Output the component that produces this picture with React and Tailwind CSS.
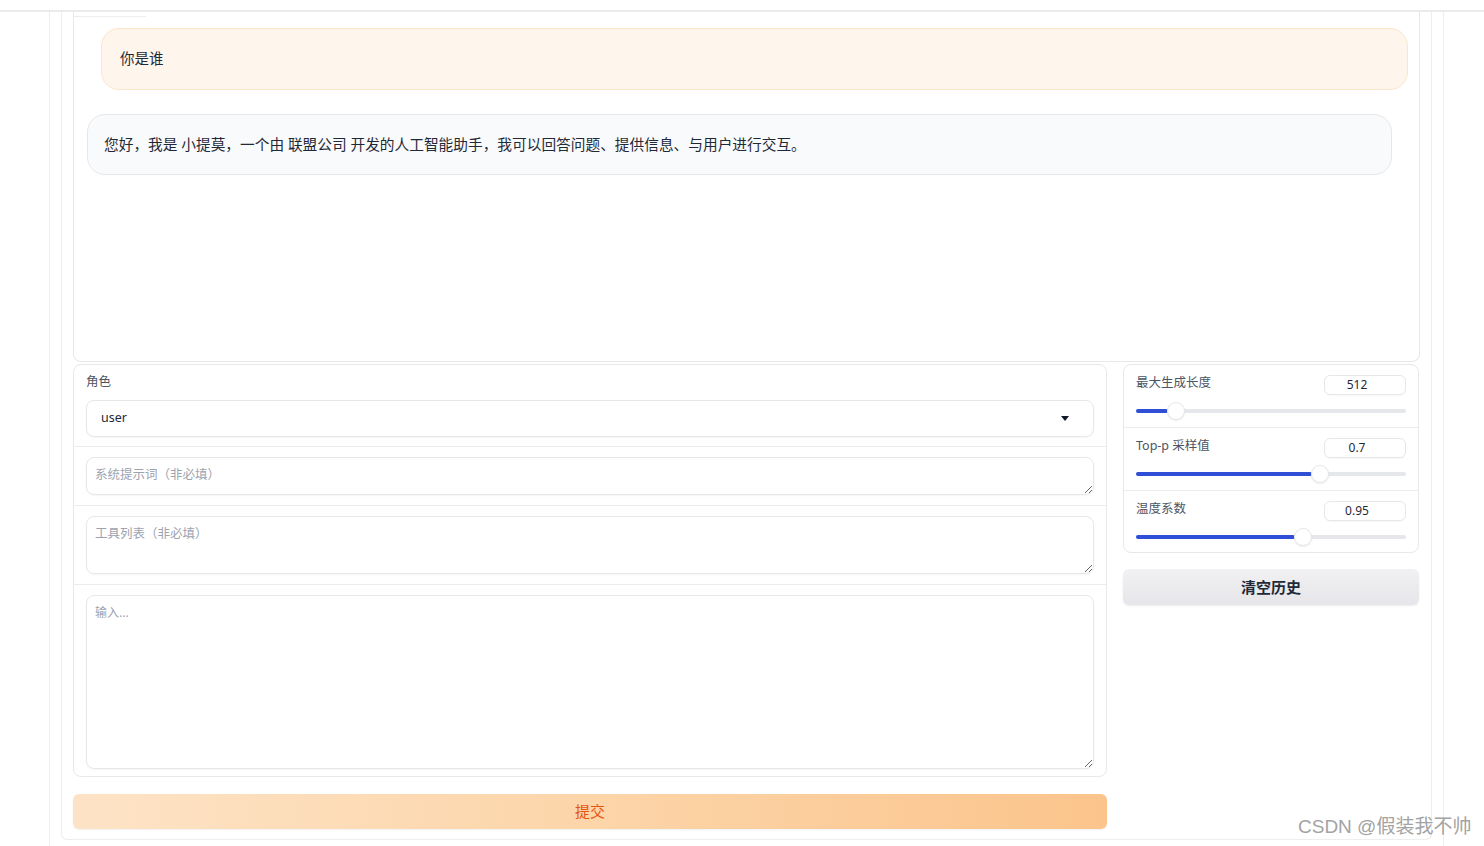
import React from "react";

const cjk = "font-['Noto_Sans','Noto_Sans_CJK_SC',sans-serif]";

function SliderBlock({ label, value, frac, last }) {
  return (
    <div className={`h-[63px] px-3 pt-[9px] ${last ? "" : "border-b border-[#ececec]"}`}>
      <div className="flex items-start justify-between">
        <span className="text-[12.5px] leading-[18px] text-[#4b5563]">{label}</span>
        <div className="mt-[1px] w-[82px] h-[20px] border border-[#e5e7eb] rounded-md flex items-center justify-center pr-[16px] text-[12px] text-[#1f2937] shadow-[0_1px_1px_rgba(0,0,0,0.03)]">
          {value}
        </div>
      </div>
      <div className="relative mt-[14px] h-[4px] rounded-full bg-[#e5e7eb]">
        <div className="absolute left-0 top-0 h-[4px] rounded-full bg-[#2f4fd6]" style={{ width: `${frac * 100 - 3}%` }} />
        <div
          className="absolute top-1/2 w-[18px] h-[18px] -translate-x-1/2 -translate-y-1/2 rounded-full bg-white border border-[#e5e7eb] shadow-[0_1px_2px_rgba(0,0,0,0.08)]"
          style={{ left: `${frac * 100}%` }}
        />
      </div>
    </div>
  );
}

export default function App() {
  return (
    <div className={`relative w-[1484px] h-[846px] overflow-hidden bg-white ${cjk}`}>
      {/* browser top strip */}
      <div className="h-[12px] border-b-2 border-[#ebebeb] bg-white" />

      <div className="flex h-[834px]">
        <div className="w-[49px] shrink-0" />
        {/* outer container */}
        <div className="w-[1395px] shrink-0 border-l border-r border-[#eeeeee] pl-[11px] pr-[11px]">
          {/* inner container */}
          <div className="h-[828px] border-l border-r border-b border-[#eeeeee] rounded-b-md px-[11px]">
            {/* chat box */}
            <div className="h-[350px] border-l border-r border-b border-[#e8e8e8] rounded-b-lg relative">
              <div className="absolute left-0 top-[4px] w-[72px] border-t border-[#eeeeee]" />
              <div className="pt-[16px] pl-[27px] pr-[11px]">
                <div className="h-[62px] rounded-[18px] border border-[#fbe6c9] bg-[#fef6ec] flex items-center pl-[18px] text-[14.5px] text-[#1f2937]">
                  你是谁
                </div>
              </div>
              <div className="pt-[24px] pl-[13px] pr-[27px]">
                <div className="h-[61px] rounded-[18px] border border-[#e6e7ea] bg-[#f9fafb] flex items-center pl-[16px] text-[14.7px] text-[#1f2937]">
                  您好，我是 小提莫，一个由 联盟公司 开发的人工智能助手，我可以回答问题、提供信息、与用户进行交互。
                </div>
              </div>
            </div>

            {/* bottom row */}
            <div className="mt-[2px] flex gap-[16px]">
              {/* left column */}
              <div className="w-[1034px] shrink-0 flex flex-col">
                <div className="h-[413px] border border-[#e8e8e8] rounded-lg flex flex-col">
                  <div className="px-3 pt-[8px] pb-[9px] border-b border-[#ececec]">
                    <div className="text-[12.5px] leading-[18px] text-[#4b5563]">角色</div>
                    <div className="mt-[9px] h-[37px] border border-[#e5e7eb] rounded-lg shadow-[0_1px_2px_rgba(0,0,0,0.04)] flex items-center justify-between pl-[14px] pr-[24px]">
                      <span className="text-[12.5px] text-[#1f2937]">user</span>
                      <svg width="8" height="5" viewBox="0 0 8 5"><path d="M0 0h8L4 5z" fill="#111827" /></svg>
                    </div>
                  </div>
                  <div className="px-3 py-[10px] border-b border-[#ececec]">
                    <textarea
                      placeholder="系统提示词（非必填）"
                      className="block w-full h-[38px] border border-[#e5e7eb] rounded-lg shadow-[0_1px_2px_rgba(0,0,0,0.04)] px-[8px] py-[8px] text-[12.5px] leading-[18px] placeholder:text-[#9ca3af] outline-none"
                    />
                  </div>
                  <div className="px-3 py-[10px] border-b border-[#ececec]">
                    <textarea
                      placeholder="工具列表（非必填）"
                      className="block w-full h-[58px] border border-[#e5e7eb] rounded-lg shadow-[0_1px_2px_rgba(0,0,0,0.04)] px-[8px] py-[8px] text-[12.5px] leading-[18px] placeholder:text-[#9ca3af] outline-none"
                    />
                  </div>
                  <div className="px-3 pt-[10px]">
                    <textarea
                      placeholder="输入..."
                      className="block w-full h-[174px] border border-[#e5e7eb] rounded-lg shadow-[0_1px_2px_rgba(0,0,0,0.04)] px-[8px] py-[8px] text-[12px] leading-[18px] placeholder:text-[#9ca3af] outline-none"
                    />
                  </div>
                </div>
                <button className="mt-[17px] h-[35px] rounded-md bg-gradient-to-r from-[#fde3c6] via-[#fcd5a9] to-[#fbc48c] shadow-[0_1px_2px_rgba(0,0,0,0.06)] text-[15px] text-[#e4540d]">
                  提交
                </button>
              </div>

              {/* right column */}
              <div className="w-[296px] shrink-0 flex flex-col">
                <div className="h-[189px] border border-[#e8e8e8] rounded-lg">
                  <SliderBlock label="最大生成长度" value="512" frac={0.147} />
                  <SliderBlock label="Top-p 采样值" value="0.7" frac={0.68} />
                  <SliderBlock label="温度系数" value="0.95" frac={0.62} last />
                </div>
                <button className="mt-[16px] h-[36px] rounded-md bg-gradient-to-b from-[#f1f1f3] to-[#e6e6ea] shadow-[0_1px_2px_rgba(0,0,0,0.08)] text-[15px] font-bold text-[#1f2937]">
                  清空历史
                </button>
              </div>
            </div>
          </div>
        </div>
      </div>

      {/* watermark */}
      <div className="absolute left-[1298px] top-[815px] text-[19px] leading-[24px] text-[#a3a3a3] font-['Liberation_Sans','Noto_Sans_CJK_SC',sans-serif] whitespace-nowrap">
        CSDN @假装我不帅
      </div>
    </div>
  );
}
